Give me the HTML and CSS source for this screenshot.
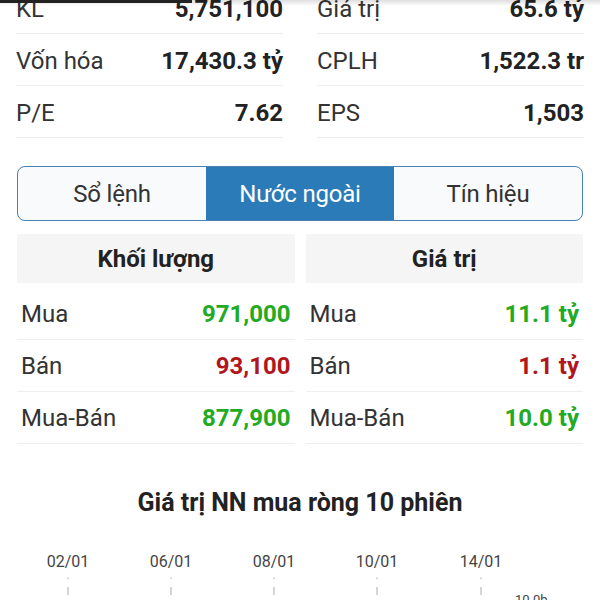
FILE: index.html
```html
<!DOCTYPE html>
<html lang="vi">
<head>
<meta charset="utf-8">
<title>Nước ngoài</title>
<link rel="stylesheet" href="styles.css">
</head>
<body>
<div class="topshade"></div>
<div class="progress"></div>

<div class="stats">
  <div class="stat"><span class="lbl">KL</span><span class="val">5,751,100</span></div>
  <div class="stat"><span class="lbl">Giá trị</span><span class="val">65.6 tỷ</span></div>
  <div class="stat"><span class="lbl">Vốn hóa</span><span class="val">17,430.3 tỷ</span></div>
  <div class="stat"><span class="lbl">CPLH</span><span class="val">1,522.3 tr</span></div>
  <div class="stat"><span class="lbl">P/E</span><span class="val">7.62</span></div>
  <div class="stat"><span class="lbl">EPS</span><span class="val">1,503</span></div>
</div>

<div class="tabs">
  <div class="tab">Sổ lệnh</div>
  <div class="tab active">Nước ngoài</div>
  <div class="tab">Tín hiệu</div>
</div>

<div class="tables">
  <div class="table">
    <div class="thead">Khối lượng</div>
    <div class="trow"><span class="lbl">Mua</span><span class="num up">971,000</span></div>
    <div class="trow"><span class="lbl">Bán</span><span class="num down">93,100</span></div>
    <div class="trow"><span class="lbl">Mua-Bán</span><span class="num up">877,900</span></div>
  </div>
  <div class="table">
    <div class="thead">Giá trị</div>
    <div class="trow"><span class="lbl">Mua</span><span class="num up">11.1 tỷ</span></div>
    <div class="trow"><span class="lbl">Bán</span><span class="num down">1.1 tỷ</span></div>
    <div class="trow"><span class="lbl">Mua-Bán</span><span class="num up">10.0 tỷ</span></div>
  </div>
</div>

<h2 class="chart-title">Giá trị NN mua ròng 10 phiên</h2>

<svg class="chart" width="600" height="90" viewBox="0 0 600 90">
  <g class="dates" text-anchor="middle">
    <text x="68" y="47">02/01</text>
    <text x="171" y="47">06/01</text>
    <text x="274" y="47">08/01</text>
    <text x="377" y="47">10/01</text>
    <text x="481" y="47">14/01</text>
  </g>
  <g class="ticks">
    <line x1="68" y1="57.5" x2="68" y2="59"/>
    <line x1="171" y1="57.5" x2="171" y2="59"/>
    <line x1="274" y1="57.5" x2="274" y2="59"/>
    <line x1="377" y1="57.5" x2="377" y2="59"/>
    <line x1="481" y1="57.5" x2="481" y2="59"/>
    <line x1="68" y1="67" x2="68" y2="75"/>
    <line x1="171" y1="67" x2="171" y2="75"/>
    <line x1="274" y1="67" x2="274" y2="75"/>
    <line x1="377" y1="67" x2="377" y2="75"/>
    <line x1="481" y1="67" x2="481" y2="75"/>
  </g>
  <text class="axis" x="515" y="84">10.0b</text>
</svg>
</body>
</html>
```

FILE: styles.css
```css
html, body {
  margin: 0;
  padding: 0;
  background: #ffffff;
  height: 600px;
  overflow: hidden;
}

body {
  font-family: Roboto, "Noto Sans", "Liberation Sans", sans-serif;
  color: #2b2b2b;
  position: relative;
}

.topshade {
  position: absolute;
  top: 0;
  left: 0;
  width: 600px;
  height: 6px;
  background: linear-gradient(rgba(0,0,0,0.13), rgba(0,0,0,0));
  z-index: 2;
}

.progress {
  position: absolute;
  top: 0;
  left: 0;
  width: 192px;
  height: 3px;
  background: #222222;
  z-index: 3;
}

.stats {
  display: grid;
  grid-template-columns: 1fr 1fr;
  column-gap: 34px;
  padding: 0 16px;
  margin-top: -18px;
}

.stat {
  height: 48px;
  padding-top: 3px;
  border-bottom: 1px solid #eeeeee;
  display: flex;
  align-items: center;
  justify-content: space-between;
  font-size: 24px;
}

.stat .lbl {
  color: #333333;
}

.stat .val {
  font-weight: 700;
  color: #222222;
}

.tabs {
  display: flex;
  margin: 28px 17px 0 17px;
  height: 53px;
  border: 1px solid #4a83b3;
  border-radius: 8px;
  overflow: hidden;
  background: #f8fafc;
}

.tab {
  flex: 1;
  display: flex;
  align-items: center;
  justify-content: center;
  font-size: 24px;
  color: #333333;
  letter-spacing: -0.2px;
}

.tab.active {
  background: #2a7bb8;
  color: #ffffff;
}

.tables {
  display: grid;
  grid-template-columns: 1fr 1fr;
  column-gap: 11px;
  margin: 13px 17px 0 17px;
}

.thead {
  height: 49px;
  background: #f5f5f5;
  display: flex;
  align-items: center;
  justify-content: center;
  font-size: 24px;
  font-weight: 700;
  color: #222222;
  margin-bottom: 5px;
}

.trow {
  height: 51px;
  border-bottom: 1px solid #eeeeee;
  display: flex;
  align-items: center;
  justify-content: space-between;
  padding: 0 4px 0 4px;
  font-size: 24px;
}

.trow .lbl {
  color: #333333;
}

.num {
  font-weight: 700;
}

.num.up {
  color: #22aa22;
}

.num.down {
  color: #b0161c;
}

.chart-title {
  margin: 44px 0 0 0;
  height: 30px;
  line-height: 30px;
  text-align: center;
  font-size: 25px;
  font-weight: 700;
  color: #222222;
}

.chart {
  display: block;
  margin-top: 2px;
}

.dates text {
  font-family: Roboto, "Noto Sans", sans-serif;
  font-size: 16px;
  fill: #444444;
}

.ticks line {
  stroke: #aaaaaa;
  stroke-width: 1;
}

.axis {
  font-family: Roboto, "Noto Sans", sans-serif;
  font-size: 13px;
  fill: #444444;
}
```
